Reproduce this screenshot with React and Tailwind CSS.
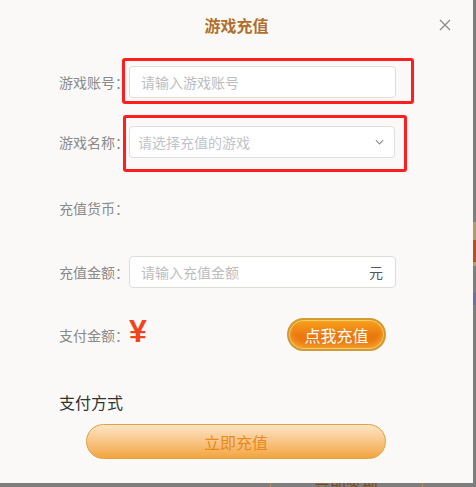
import React from "react";

const font = { fontFamily: '"Noto Sans CJK SC", "Noto Sans", sans-serif' };

function Label({ children }) {
  return (
    <div className="w-[70px] shrink-0 text-[14px] text-[#8a8a8a] leading-none">
      {children}
    </div>
  );
}

export default function App() {
  return (
    <div
      className="relative w-[476px] h-[487px] bg-[#7e7e7e] overflow-hidden"
      style={font}
    >
      {/* background page peeking out */}
      <div className="absolute left-[473px] top-[222px] w-[3px] h-[44px] bg-[#b49a6a]" />
      <div className="absolute left-[473px] top-[240px] w-[3px] h-[22px] bg-[#b8501c]" />
      <div className="absolute left-[473px] top-[293px] w-[3px] h-[12px] bg-[#6f6f9a]" />
      <div className="absolute left-[270px] top-[483px] w-px h-[4px] bg-[#b98a4a]" />
      <div className="absolute left-[422px] top-[483px] w-px h-[4px] bg-[#b98a4a]" />
      <div className="absolute left-[314px] top-[479px] text-[16px] leading-none text-[#7a4a10]">
        立即签到
      </div>

      <div className="relative w-[473px] h-[483px] bg-[#faf9f7]">
        <div className="h-[50px] flex items-center justify-center">
          <span className="text-[16px] font-bold text-[#b0702c]">游戏充值</span>
        </div>
        <button className="absolute left-[439px] top-[19px] w-[12px] h-[12px]">
          <svg viewBox="0 0 12 12" className="w-[12px] h-[12px]">
            <path d="M1 1L11 11M11 1L1 11" stroke="#8a8a8a" strokeWidth="1.3" />
          </svg>
        </button>

        <div className="pl-[59px]">
          <div className="mt-[16px] h-[32px] flex items-center">
            <Label>游戏账号：</Label>
            <div className="relative">
              <div className="w-[267px] h-[32px] rounded-[4px] border border-[#e0dcd8] bg-white flex items-center pl-[11px] text-[14px] text-[#bdbdbd]">
                请输入游戏账号
              </div>
              <div className="absolute left-[-7px] right-[-18px] top-[-8px] bottom-[-6px] border-[3px] border-[#ff1e1e] rounded-[3px]" />
            </div>
          </div>

          <div className="mt-[28px] h-[32px] flex items-center">
            <Label>游戏名称：</Label>
            <div className="relative">
              <div className="w-[266px] h-[32px] rounded-[4px] border border-[#dcdfe6] bg-white flex items-center justify-between pl-[8px] pr-[10px] text-[14px] text-[#c0c4cc]">
                <span>请选择充值的游戏</span>
                <svg viewBox="0 0 10 6" className="w-[9px] h-[6px]">
                  <path d="M1 1L5 5L9 1" fill="none" stroke="#8a8f99" strokeWidth="1.3" />
                </svg>
              </div>
              <div className="absolute left-[-6px] right-[-12px] top-[-11px] bottom-[-14px] border-[3px] border-[#ff1e1e] rounded-[3px]" />
            </div>
          </div>

          <div className="mt-[34px] h-[32px] flex items-center">
            <Label>充值货币：</Label>
          </div>

          <div className="mt-[32px] h-[32px] flex items-center">
            <Label>充值金额：</Label>
            <div className="w-[267px] h-[32px] rounded-[4px] border border-[#e0dcd8] bg-white flex items-center justify-between pl-[11px] pr-[12px] text-[14px]">
              <span className="text-[#bdbdbd]">请输入充值金额</span>
              <span className="text-[#555]">元</span>
            </div>
          </div>

          <div className="mt-[30px] h-[33px] flex items-center">
            <Label>支付金额：</Label>
            <span className="w-[17px] text-[32px] font-bold leading-none text-[#f0441c] -mt-[8px] font-['Liberation_Sans',sans-serif]">
              ¥
            </span>
            <button className="ml-[141px] w-[99px] h-[33px] rounded-full border-2 border-[#d19a34] bg-gradient-to-b from-[#f7a21e] via-[#ec7a10] to-[#e8700e] shadow-[inset_0_0_0_1px_rgba(255,230,150,0.6),inset_0_-4px_6px_rgba(255,220,80,0.5)] text-white text-[16px] flex items-center justify-center">
              点我充值
            </button>
          </div>

          <div className="mt-[40px] h-[22px] flex items-center text-[16px] text-[#333]">
            支付方式
          </div>
        </div>

        <div className="mt-[11px] ml-[86px]">
          <button className="w-[300px] h-[35px] rounded-full border border-[#e0a040] bg-gradient-to-b from-[#fde4c2] to-[#f2a53a] text-[#e8891c] text-[16px] flex items-center justify-center">
            立即充值
          </button>
        </div>
      </div>
    </div>
  );
}
